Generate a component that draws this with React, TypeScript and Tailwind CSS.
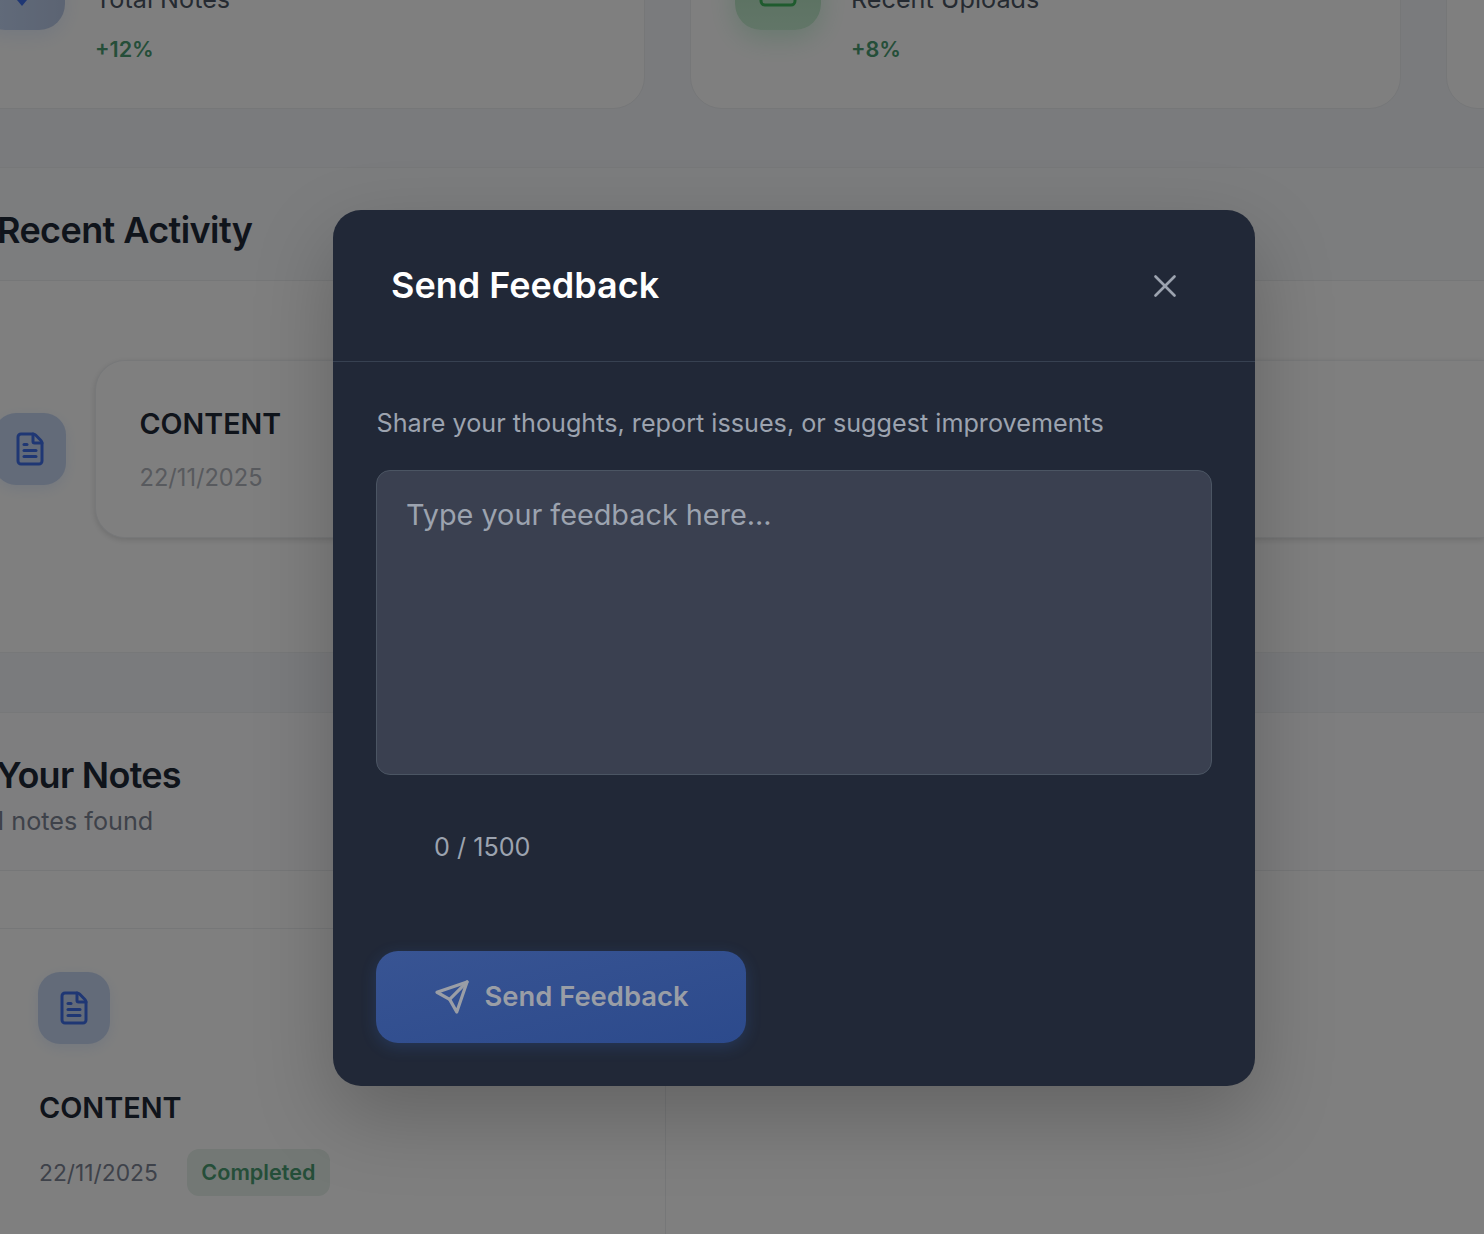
import React from 'react';
import { FileText, X } from 'lucide-react';

const font = { fontFamily: 'Inter, "Noto Sans", sans-serif' };

const SendIcon = () => (
  <svg width="38" height="38" viewBox="0 0 24 24" fill="none" stroke="currentColor" strokeWidth="2" strokeLinecap="round" strokeLinejoin="round">
    <path d="M21.5 2.5 10.5 13.5" />
    <path d="M21.5 2.5 15 21.5l-4.5-8-8-4.5z" />
  </svg>
);

// only the bottom of these two shows above the page edge
const NotesGlyph = () => (
  <svg width="40" height="40" viewBox="0 0 40 40" className="text-[#3f6fe8]">
    <path d="M4 32.5h32" stroke="currentColor" strokeWidth="1" opacity="0.35" />
    <path d="M15 33h10l-5 6z" fill="currentColor" />
  </svg>
);

const UploadGlyph = () => (
  <svg width="40" height="40" viewBox="0 0 40 40" fill="none" stroke="currentColor" strokeWidth="3" className="text-[#3fb65c]">
    <rect x="3" y="8" width="34" height="30" rx="4" />
    <path d="M20 28V14M13 20l7-7 7 7" strokeLinecap="round" strokeLinejoin="round" />
  </svg>
);

const DocTile = ({ className }: { className: string }) => (
  <div className={`flex size-[72px] shrink-0 items-center justify-center rounded-[22px] bg-[#c6d6f2] text-[#3f6fe8] shadow-[0_4px_14px_rgba(59,130,246,0.12)] ${className}`}>
    <FileText size={36} strokeWidth={2} />
  </div>
);

const StatCard = ({ title, change, tile, icon }: { title: string; change: string; tile: string; icon: React.ReactNode }) => (
  <div className="flex h-[172px] w-[711px] shrink-0 gap-[30px] rounded-[32px] border border-[#eceef1] bg-white px-[44px]">
    <div className={`mt-[6px] flex size-[86px] shrink-0 items-center justify-center rounded-[26px] ${tile}`}>{icon}</div>
    <div className="pt-[45px]">
      <div className="text-[25.2px] leading-[32px] text-[#4b5563]">{title}</div>
      <div className="mt-[20px] text-[21.6px] leading-[28px] font-semibold text-[#4a9d72]">{change}</div>
    </div>
  </div>
);

export default function App() {
  return (
    <div className="relative h-[1234px] w-[1484px] overflow-hidden bg-[#f4f7fb]" style={font}>
      <div className="flex flex-col">
        <div className="-mt-[63px] -ml-[66px] flex gap-[45px]">
          <StatCard
            title="Total Notes"
            change="+12%"
            tile="bg-gradient-to-r from-[#c5d8f7] to-[#b8c8e6] shadow-[0_6px_20px_rgba(59,130,246,0.12)]"
            icon={<NotesGlyph />}
          />
          <StatCard
            title="Recent Uploads"
            change="+8%"
            tile="bg-gradient-to-b from-[#a9dcb6] to-[#c4ecd0] shadow-[0_8px_28px_rgba(34,197,94,0.22)]"
            icon={<UploadGlyph />}
          />
          <div className="h-[172px] w-[711px] shrink-0 rounded-[32px] border border-[#eceef1] bg-white" />
        </div>

        <section className="mt-[58px] h-[486px] border-y border-[#eef0f3] bg-white">
          <div className="flex h-[113px] items-center border-b border-[#eceef1] bg-[#f9fafc] pt-[12px]">
            <h2 className="-ml-[3px] text-[36px] leading-[40px] font-semibold tracking-[-0.6px] text-[#1f2937]">Recent Activity</h2>
          </div>
          <div className="flex items-center gap-[29px] pt-[79px]">
            <DocTile className="-ml-[6px]" />
            <div className="h-[178px] flex-1 rounded-l-[30px] border-y border-l border-[#eef0f3] bg-white pt-[45px] pl-[43.5px] shadow-[0_2px_6px_rgba(0,0,0,0.14)]">
              <div className="text-[28.6px] leading-[36px] font-semibold text-[#1f2937]">CONTENT</div>
              <div className="mt-[20px] text-[23.6px] leading-[32px] text-[#b0b4bc]">22/11/2025</div>
            </div>
          </div>
        </section>

        <section className="mt-[59px] border-t border-[#eef0f3] bg-white">
          <div className="flex h-[158px] flex-col justify-center border-b border-[#eceef1] bg-[#fdfdfe] pt-[9px]">
            <h2 className="-ml-[4px] text-[36px] leading-[40px] font-semibold tracking-[-0.72px] text-[#1f2937]">Your Notes</h2>
            <p className="-ml-[6px] mt-[9px] text-[25.2px] leading-[34px] text-[#7c8494]">1 notes found</p>
          </div>
          <div className="pt-[57px]">
            <div className="-ml-[45px] h-[400px] w-[711px] rounded-tl-[30px] border-t border-r border-[#eceef1] pt-[43px] pl-[83px]">
              <DocTile className="" />
              <div className="mt-[46px] pl-[1px] text-[28.8px] leading-[36px] font-semibold text-[#1f2937]">CONTENT</div>
              <div className="mt-[23px] flex items-center gap-[29px] pl-[1px]">
                <span className="text-[22.8px] leading-[32px] text-[#7c8494]">22/11/2025</span>
                <span className="flex h-[47px] items-center rounded-[12px] bg-[#e6f1ea] px-[14.5px] text-[21.6px] font-semibold text-[#4a9d72]">Completed</span>
              </div>
            </div>
          </div>
        </section>
      </div>

      <div className="absolute inset-0 bg-black/50">
        <div className="mt-[210px] ml-[333px] flex h-[876px] w-[922px] flex-col rounded-[28px] bg-[#212837] shadow-[0_30px_80px_rgba(0,0,0,0.22)]">
          <div className="flex h-[152px] shrink-0 items-center justify-between border-b border-[#374151] pr-[71px] pl-[58px]">
            <h3 className="pb-[2px] text-[36px] leading-[44px] font-semibold text-white">Send Feedback</h3>
            <X size={38} strokeWidth={1.7} className="text-[#9ca3af]" />
          </div>
          <div className="flex flex-1 flex-col px-[43px]">
            <p className="mt-[44px] pl-[0.5px] text-[25.2px] leading-[34px] text-[#9ca3af]">Share your thoughts, report issues, or suggest improvements</p>
            <textarea
              readOnly
              placeholder="Type your feedback here..."
              className="mt-[30px] h-[305px] w-[836px] resize-none rounded-[14px] border border-[#4b5563] bg-[#3a4050] px-[29px] py-[24px] text-[28.8px] leading-[40px] outline-none placeholder:text-[#9ca3af]"
            />
            <div className="mt-[55px] pl-[58px] text-[25.2px] leading-[34px] text-[#9ca3af]">0 / 1500</div>
            <button className="mt-[87px] flex h-[92px] w-[370px] items-center justify-center gap-[13px] rounded-[22px] bg-gradient-to-br from-[#385493] to-[#2c4a8c] text-[27.4px] font-semibold text-[#9a9ea6] shadow-[0_4px_16px_rgba(59,130,246,0.18)]">
              <SendIcon />
              Send Feedback
            </button>
          </div>
        </div>
      </div>
    </div>
  );
}
